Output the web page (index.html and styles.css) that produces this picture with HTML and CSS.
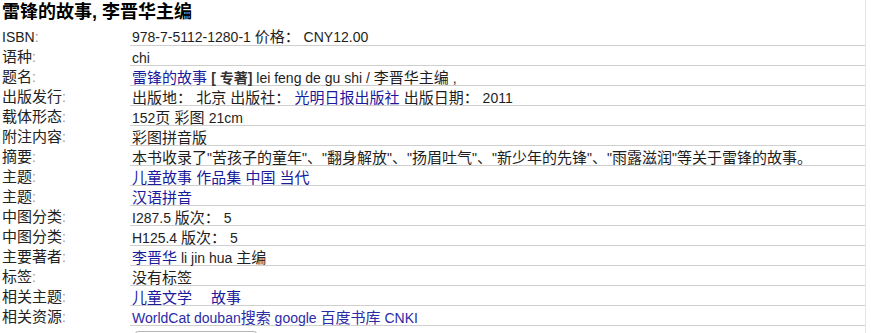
FILE: index.html
```html
<!DOCTYPE html>
<html lang="zh">
<head>
<meta charset="utf-8">
<title>雷锋的故事, 李晋华主编</title>
<link rel="stylesheet" href="styles.css">
</head>
<body>
<div class="wrap">
  <h1 class="title">雷锋的故事, 李晋华主编</h1>
  <table class="record">
    <tr><th><span class="en">ISBN</span><span class="c">:</span></th><td><span class="en">978-7-5112-1280-1 </span>价格：<span class="en"> CNY12.00</span></td></tr>
    <tr><th>语种<span class="c">:</span></th><td><span class="en">chi</span></td></tr>
    <tr><th>题名<span class="c">:</span></th><td><a href="#">雷锋的故事</a> <b class="kind">[ 专著]</b><span class="en"> lei feng de gu shi / </span>李晋华主编<span class="en"> ,</span></td></tr>
    <tr><th>出版发行<span class="c">:</span></th><td>出版地： 北京 出版社： <a href="#">光明日报出版社</a> 出版日期：<span class="en"> 2011</span></td></tr>
    <tr><th>载体形态<span class="c">:</span></th><td><span class="en">152</span>页 彩图 <span class="en">21cm</span></td></tr>
    <tr><th>附注内容<span class="c">:</span></th><td>彩图拼音版</td></tr>
    <tr><th>摘要<span class="c">:</span></th><td>本书收录了<span class="en">"</span>苦孩子的童年<span class="en">"</span>、<span class="en">"</span>翻身解放<span class="en">"</span>、<span class="en">"</span>扬眉吐气<span class="en">"</span>、<span class="en">"</span>新少年的先锋<span class="en">"</span>、<span class="en">"</span>雨露滋润<span class="en">"</span>等关于雷锋的故事。</td></tr>
    <tr><th>主题<span class="c">:</span></th><td><a href="#">儿童故事</a> <a href="#">作品集</a> <a href="#">中国</a> <a href="#">当代</a></td></tr>
    <tr><th>主题<span class="c">:</span></th><td><a href="#">汉语拼音</a></td></tr>
    <tr><th>中图分类<span class="c">:</span></th><td><span class="en">I287.5 </span>版次：<span class="en"> 5</span></td></tr>
    <tr><th>中图分类<span class="c">:</span></th><td><span class="en">H125.4 </span>版次：<span class="en"> 5</span></td></tr>
    <tr><th>主要著者<span class="c">:</span></th><td><a href="#">李晋华</a><span class="en"> li jin hua </span>主编</td></tr>
    <tr><th>标签<span class="c">:</span></th><td>没有标签</td></tr>
    <tr><th>相关主题<span class="c">:</span></th><td><a href="#">儿童文学</a><a href="#" class="gap">故事</a></td></tr>
    <tr><th>相关资源<span class="c">:</span></th><td class="res"><a href="#" class="en">WorldCat douban</a><a href="#">搜索</a><span class="en"> </span><a href="#" class="en">google</a><span class="en"> </span><a href="#">百度书库</a><span class="en"> </span><a href="#" class="en">CNKI</a></td></tr>
  </table>
  <div class="tagbox"></div>
</div>
</body>
</html>
```

FILE: styles.css
```css
html, body {
  margin: 0;
  padding: 0;
  background: #fff;
  overflow: hidden;
}
body {
  font-family: "Liberation Sans", Arial, "Noto Sans CJK SC", sans-serif;
  font-size: 15px;
  color: #1e1e1e;
}
.wrap {
  width: 866px;
  height: 333px;
  border-right: 1px solid #e6e6e6;
  box-sizing: border-box;
  overflow: hidden;
}
.title {
  margin: 0;
  padding-left: 2px;
  font-size: 18px;
  line-height: 25px;
  font-weight: bold;
  color: #000;
}
.record {
  border-collapse: collapse;
  width: 865px;
}
.record th {
  width: 128px;
  padding: 4px 0 0 2px;
  height: 16px;
  line-height: 15px;
  text-align: left;
  font-weight: normal;
  color: #222;
  vertical-align: top;
  white-space: nowrap;
}
.record th .c {
  color: #999;
  font-size: 14px;
  line-height: 14px;
}
.record td {
  padding: 4px 0 0 2px;
  height: 15px;
  line-height: 15px;
  border-bottom: 1px solid #cfcfcf;
  vertical-align: top;
  white-space: nowrap;
}
.en {
  font-size: 14px;
  line-height: 14px;
}
.record a {
  color: #1a1a9c;
  text-decoration: none;
}
.record .res a {
  color: #2b2ba8;
}
.kind {
  color: #333;
  font-size: 14px;
  line-height: 14px;
}
.gap {
  margin-left: 19px;
}
.tagbox {
  margin: 5px 0 0 135px;
  width: 120px;
  height: 20px;
  border: 1px solid #b5b5b5;
  border-radius: 3px;
}
```
